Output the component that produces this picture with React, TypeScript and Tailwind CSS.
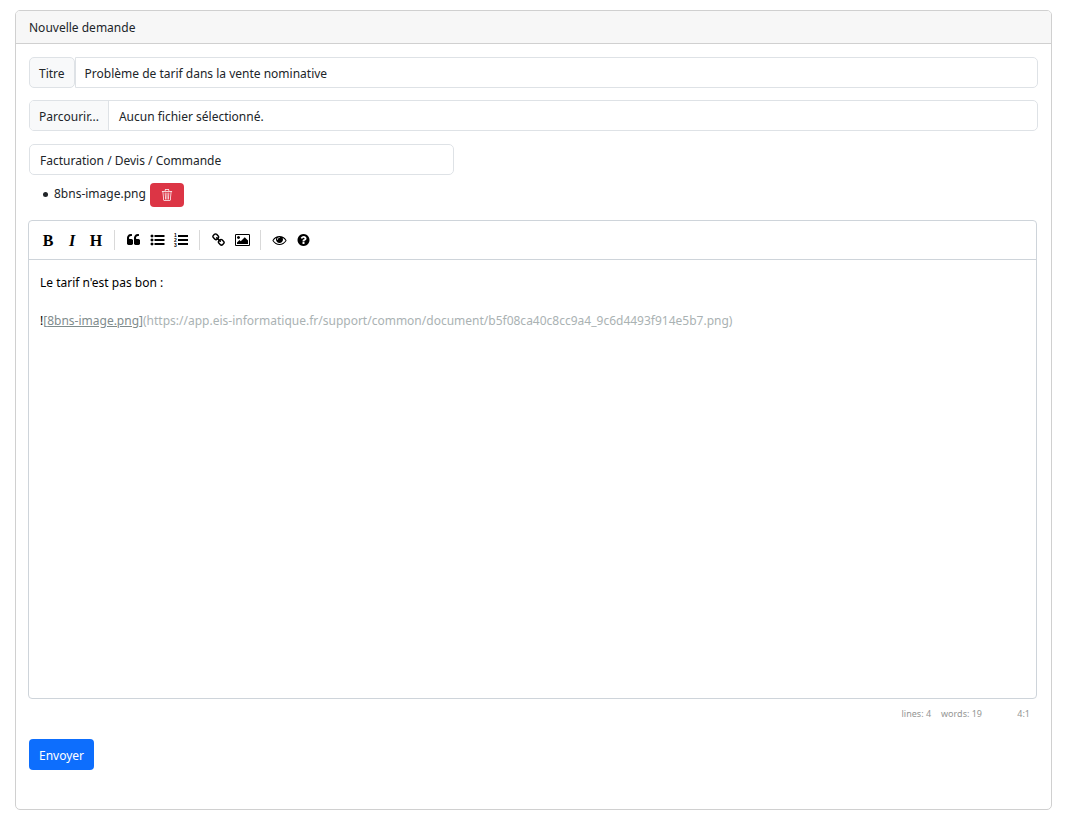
import React, { useState } from 'react';
import { BsTrash3 } from 'react-icons/bs';

const icons = {
  quote:
    'M832 960v384q0 80-56 136t-136 56h-384q-80 0-136-56t-56-136v-704q0-104 40.5-198.5t109.5-163.5 163.5-109.5 198.5-40.5h64q26 0 45 19t19 45v128q0 26-19 45t-45 19h-64q-106 0-181 75t-75 181v32q0 40 28 68t68 28h224q80 0 136 56t56 136zm896 0v384q0 80-56 136t-136 56h-384q-80 0-136-56t-56-136v-704q0-104 40.5-198.5t109.5-163.5 163.5-109.5 198.5-40.5h64q26 0 45 19t19 45v128q0 26-19 45t-45 19h-64q-106 0-181 75t-75 181v32q0 40 28 68t68 28h224q80 0 136 56t56 136z',
  list:
    'M384 1408q0 80-56 136t-136 56-136-56-56-136 56-136 136-56 136 56 56 136zm0-512q0 80-56 136t-136 56-136-56-56-136 56-136 136-56 136 56 56 136zm1408 416v192q0 13-9.5 22.5t-22.5 9.5h-1216q-13 0-22.5-9.5t-9.5-22.5v-192q0-13 9.5-22.5t22.5-9.5h1216q13 0 22.5 9.5t9.5 22.5zm-1408-928q0 80-56 136t-136 56-136-56-56-136 56-136 136-56 136 56 56 136zm1408 416v192q0 13-9.5 22.5t-22.5 9.5h-1216q-13 0-22.5-9.5t-9.5-22.5v-192q0-13 9.5-22.5t22.5-9.5h1216q13 0 22.5 9.5t9.5 22.5zm0-512v192q0 13-9.5 22.5t-22.5 9.5h-1216q-13 0-22.5-9.5t-9.5-22.5v-192q0-13 9.5-22.5t22.5-9.5h1216q13 0 22.5 9.5t9.5 22.5z',
  link:
    'M1520 1216q0-40-28-68l-208-208q-28-28-68-28-42 0-72 32 3 3 19 18.5t21.5 21.5 15 19 13 25.5 3.5 27.5q0 40-28 68t-68 28q-15 0-27.5-3.5t-25.5-13-19-15-21.5-21.5-18.5-19q-33 31-33 73 0 40 28 68l206 207q27 27 68 27 40 0 68-26l147-146q28-28 28-67zm-703-705q0-40-28-68l-206-207q-28-28-68-28-39 0-68 27l-147 146q-28 28-28 67 0 40 28 68l208 208q27 27 68 27 42 0 72-31-3-3-19-18.5t-21.5-21.5-15-19-13-25.5-3.5-27.5q0-40 28-68t68-28q15 0 27.5 3.5t25.5 13 19 15 21.5 21.5 18.5 19q33-31 33-73zm895 705q0 120-85 203l-147 146q-83 83-203 83-121 0-204-85l-206-207q-83-83-83-203 0-123 88-209l-88-88q-86 88-208 88-120 0-204-84l-208-208q-84-84-84-204t85-203l147-146q83-83 203-83 121 0 204 85l206 207q83 83 83 203 0 123-88 209l88 88q86-88 208-88 120 0 204 84l208 208q84 84 84 204z',
  image:
    'M576 576q0 80-56 136t-136 56-136-56-56-136 56-136 136-56 136 56 56 136zm1024 384v448h-1408v-192l320-320 160 160 512-512zm96-704h-1600q-13 0-22.5 9.5t-9.5 22.5v1216q0 13 9.5 22.5t22.5 9.5h1600q13 0 22.5-9.5t9.5-22.5v-1216q0-13-9.5-22.5t-22.5-9.5zm160 32v1216q0 66-47 113t-113 47h-1600q-66 0-113-47t-47-113v-1216q0-66 47-113t113-47h1600q66 0 113 47t47 113z',
  eye:
    'M1664 960q-152-236-381-353 61 104 61 225 0 185-131.5 316.5t-316.5 131.5-316.5-131.5-131.5-316.5q0-121 61-225-229 117-381 353 133 205 333.5 326.5t434.5 121.5 434.5-121.5 333.5-326.5zm-720-384q0-20-14-34t-34-14q-125 0-214.5 89.5t-89.5 214.5q0 20 14 34t34 14 34-14 14-34q0-86 61-147t147-61q20 0 34-14t14-34zm848 384q0 34-20 69-140 230-376.5 368.5t-499.5 138.5-499.5-139-376.5-368q-20-35-20-69t20-69q140-229 376.5-368t499.5-139 499.5 139 376.5 368q20 35 20 69z',
  help:
    'M1024 1376v-192q0-14-9-23t-23-9h-192q-14 0-23 9t-9 23v192q0 14 9 23t23 9h192q14 0 23-9t9-23zm256-672q0-88-55.5-163t-138.5-116-170-41q-243 0-371 213-15 24 8 42l132 100q7 6 19 6 16 0 25-12 53-68 86-92 34-24 86-24 48 0 85.5 26t37.5 59q0 38-20 61t-68 45q-63 28-115.5 86.5t-52.5 125.5v36q0 14 9 23t23 9h192q14 0 23-9t9-23q0-19 21.5-49.5t54.5-49.5q32-18 49-28.5t46-35 44.5-48 28-60.5 12.5-81zm384 192q0 209-103 385.5t-279.5 279.5-385.5 103-385.5-103-279.5-279.5-103-385.5 103-385.5 279.5-279.5 385.5-103 385.5 103 279.5 279.5 103 385.5z',
};

const Icon: React.FC<{ name: keyof typeof icons }> = ({ name }) => (
  <svg viewBox={name === 'image' ? '-64 0 1920 1792' : '0 0 1792 1792'} className="h-[14px] w-[15px]" fill="currentColor">
    <path d={icons[name]} />
  </svg>
);

const OrderedListIcon = () => (
  <svg viewBox="0 0 14 14" className="h-[14px] w-[14px] overflow-visible font-['Liberation_Sans',sans-serif] font-bold" fill="currentColor">
    <path d="M4 2h10v2H4zM4 6h10v2H4zM4 10h10v2H4z" />
    <text x="0" y="4" fontSize="5">1</text>
    <text x="0" y="9" fontSize="5">2</text>
    <text x="0" y="14" fontSize="5">3</text>
  </svg>
);

const ToolButton: React.FC<{ label: string; children: React.ReactNode }> = ({ label, children }) => (
  <button
    type="button"
    aria-label={label}
    className="flex h-[30px] w-6 items-center justify-center rounded hover:bg-gray-100"
  >
    {children}
  </button>
);

const Separator = () => <span className="mx-[6px] h-5 w-px bg-[#d9d9d9]"></span>;

const App: React.FC = () => {
  const [title, setTitle] = useState('Problème de tarif dans la vente nominative');
  const [fileName, setFileName] = useState('Aucun fichier sélectionné.');
  const [files, setFiles] = useState(['8bns-image.png']);

  return (
    <div className="bg-white pt-[10px] pr-[27px] pb-4 pl-[15px] font-['Noto_Sans','Open_Sans',sans-serif] text-[12px] leading-[19px] text-[#212529]">
      <div className="overflow-hidden rounded-[5px] border border-[#d0d0d0]">
        <div className="border-b border-[#d0d0d0] bg-[#f7f7f7] px-[13px] pt-[7px] pb-[6px]">Nouvelle demande</div>

        <form className="px-[13px] pt-[13px] pb-[39px]" onSubmit={(e) => e.preventDefault()}>
          <div className="mb-3 flex h-[31px]">
            <label
              htmlFor="title"
              className="flex items-center rounded-[5px] border border-[#dee2e6] bg-[#f8f9fa] px-[9px] pt-[2px]"
            >
              Titre
            </label>
            <input
              id="title"
              value={title}
              onChange={(e) => setTitle(e.target.value)}
              className="min-w-0 flex-1 rounded-r-[5px] border border-[#dee2e6] px-[9px] pt-[2px] outline-none"
            />
          </div>

          <label className="mb-[13px] flex h-[31px] items-stretch overflow-hidden rounded-[5px] border border-[#dee2e6]">
            <span className="flex items-center border-r border-[#dee2e6] bg-[#f8f9fa] px-[9px] pt-[2px]">
              Parcourir...
            </span>
            <span className="flex items-center px-[10px] pt-[2px]">{fileName}</span>
            <input
              type="file"
              className="sr-only"
              onChange={(e) => setFileName(e.target.files?.[0]?.name ?? 'Aucun fichier sélectionné.')}
            />
          </label>

          <select
            aria-label="Catégorie"
            className="block h-[31px] w-[425px] max-w-full appearance-none rounded-[5px] border border-[#dee2e6] bg-white px-[10px] pt-[2px] outline-none"
          >
            <option>Facturation / Devis / Commande</option>
          </select>

          <ul className="mt-2 mb-[13px] min-h-6 list-none pl-[14px]">
            {files.map((file) => (
              <li key={file} className="flex items-center">
                <span className="mr-[6px] mb-px h-[5px] w-[5px] rounded-full bg-[#212529]"></span>
                <span className="mr-1 pb-[3px]">{file}</span>
                <button
                  type="button"
                  aria-label="Supprimer"
                  onClick={() => setFiles(files.filter((f) => f !== file))}
                  className="flex h-6 w-[34px] items-center justify-center rounded bg-[#dc3545] text-white"
                >
                  <BsTrash3 size={12} />
                </button>
              </li>
            ))}
          </ul>

          <div className="-ml-px mr-px rounded-[4px] border border-[#ced4da] text-black">
            <div className="flex h-[39px] items-center border-b border-[#ced4da] px-[7px]">
              <ToolButton label="Gras">
                <span className="font-['Liberation_Serif',serif] text-[16px] font-bold">B</span>
              </ToolButton>
              <ToolButton label="Italique">
                <span className="font-['Liberation_Serif',serif] text-[16px] font-bold italic">I</span>
              </ToolButton>
              <ToolButton label="Titre">
                <span className="font-['Liberation_Serif',serif] text-[16px] font-bold">H</span>
              </ToolButton>
              <Separator />
              <ToolButton label="Citation">
                <Icon name="quote" />
              </ToolButton>
              <ToolButton label="Liste à puces">
                <Icon name="list" />
              </ToolButton>
              <ToolButton label="Liste numérotée">
                <OrderedListIcon />
              </ToolButton>
              <Separator />
              <ToolButton label="Lien">
                <Icon name="link" />
              </ToolButton>
              <ToolButton label="Image">
                <Icon name="image" />
              </ToolButton>
              <Separator />
              <ToolButton label="Aperçu">
                <Icon name="eye" />
              </ToolButton>
              <ToolButton label="Aide">
                <Icon name="help" />
              </ToolButton>
            </div>
            <div
              role="textbox"
              aria-multiline="true"
              aria-label="Message"
              contentEditable
              suppressContentEditableWarning
              className="min-h-[438px] px-[11px] py-[13px] outline-none"
            >
              <p>Le tarif n'est pas bon :</p>
              <p>
                <br />
              </p>
              <p className="break-words text-[#aab2b3]">
                <span className="text-black">!</span>
                <span className="text-[#7f8c8d]">
                  [<span className="underline">8bns-image.png</span>]
                </span>
                (https://app.eis-informatique.fr/support/common/document/b5f08ca40c8cc9a4_9c6d4493f914e5b7.png)
              </p>
            </div>
          </div>

          <div className="flex justify-end pt-[5px] pr-2 text-[9px] text-[#959694]">
            <span>lines: 4</span>
            <span className="ml-[10px]">words: 19</span>
            <span className="ml-[10px] w-[38px] text-right">4:1</span>
          </div>

          <button type="submit" className="mt-4 h-[31px] rounded-[4px] bg-[#0d6efd] px-[10px] pt-[2px] text-white">
            Envoyer
          </button>
        </form>
      </div>
    </div>
  );
};

export default App;
